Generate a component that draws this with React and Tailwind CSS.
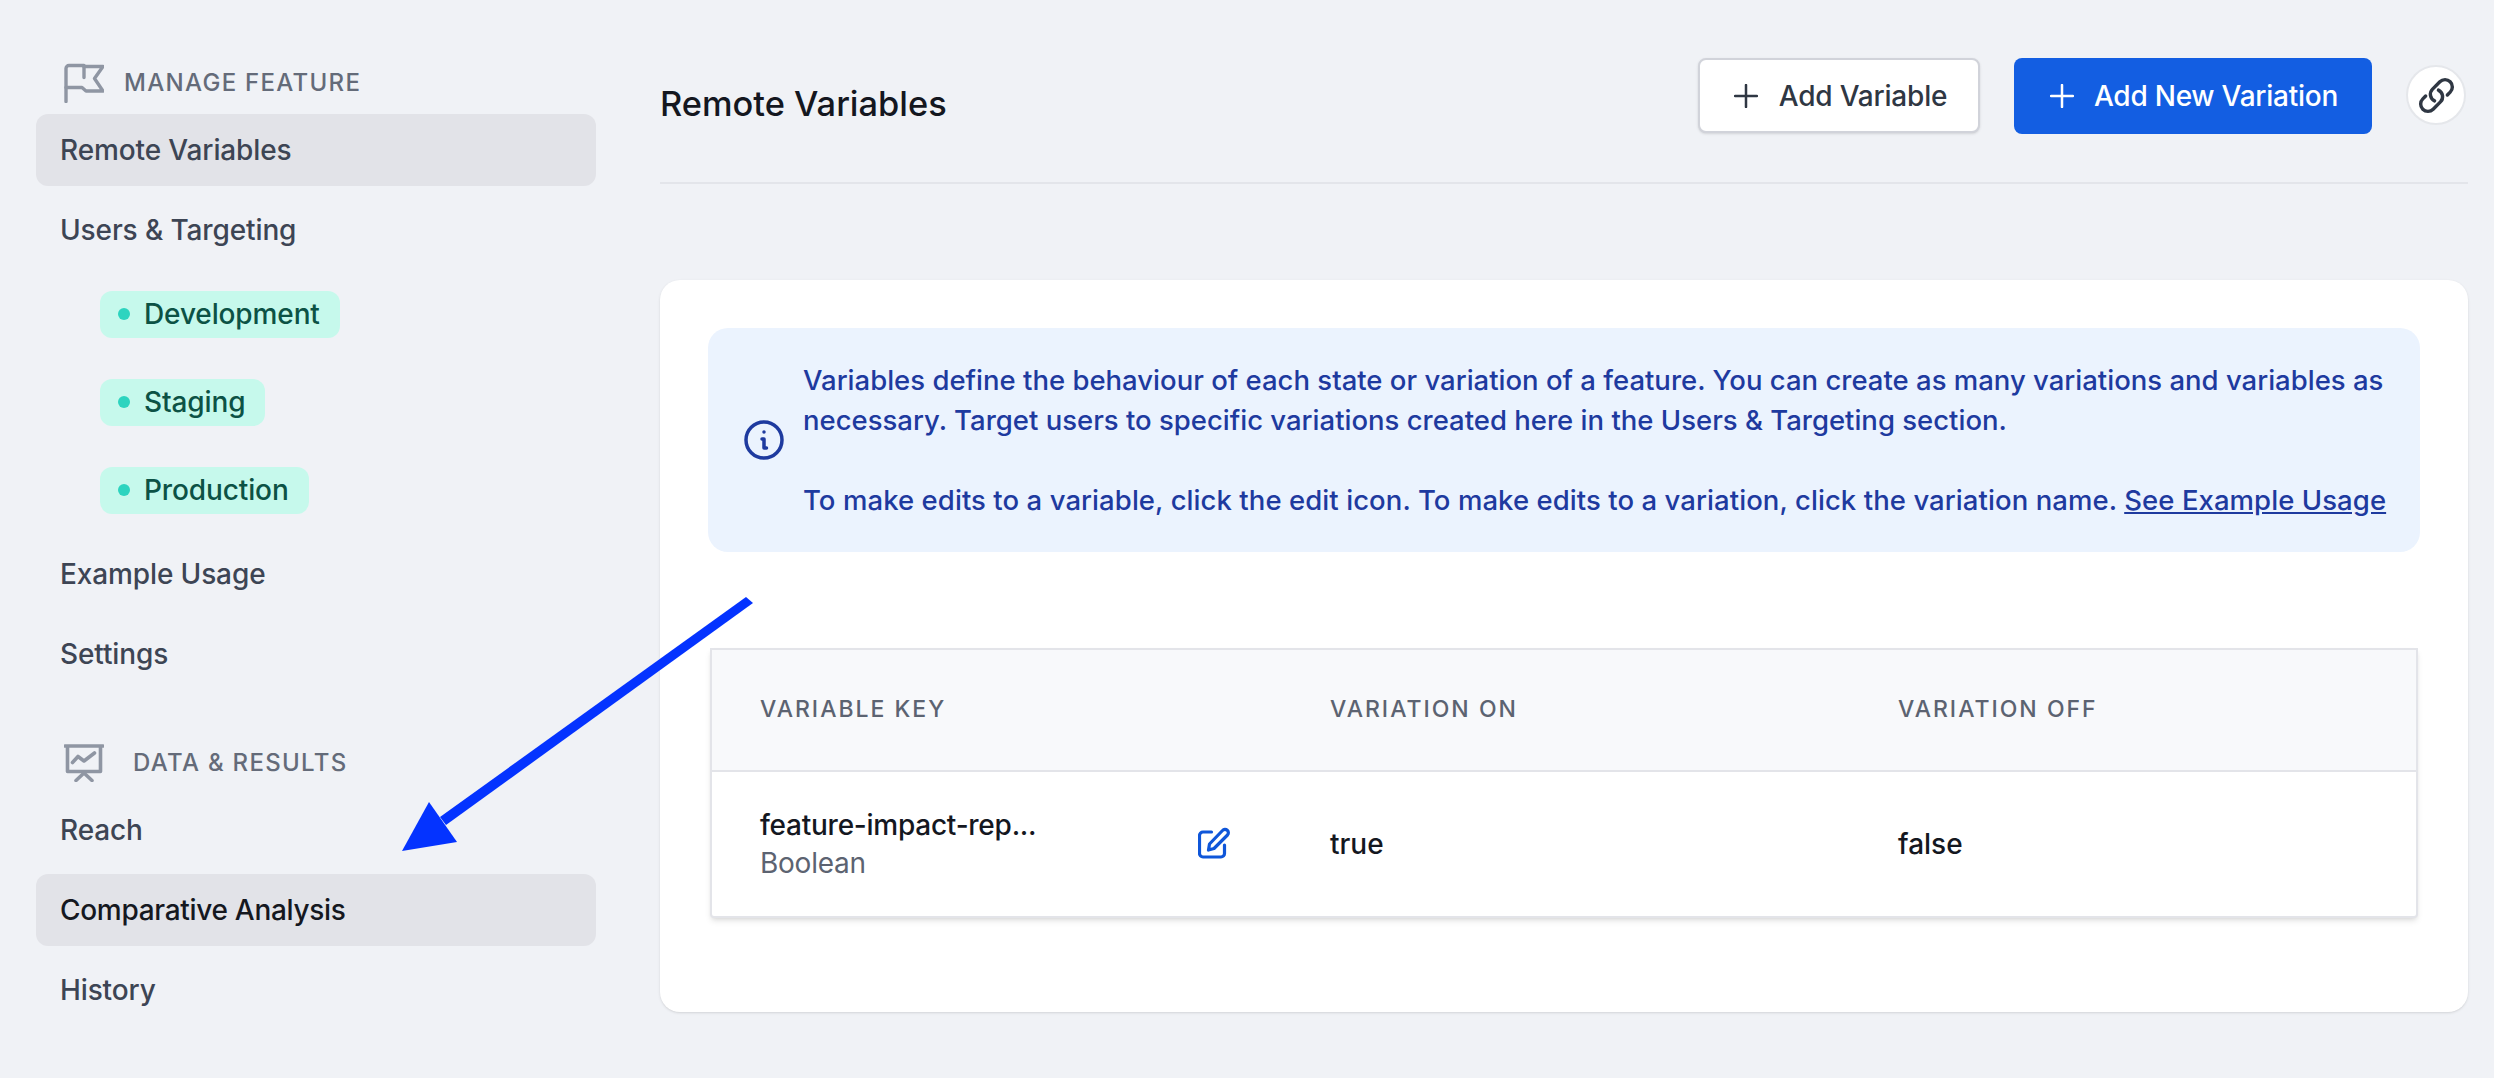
import React from 'react';

function FlagIcon() {
  return (
    <svg width="40" height="40" viewBox="0 0 40 40" fill="none" stroke="#8f96a3" strokeWidth="3.4" strokeLinecap="round" strokeLinejoin="round">
      <path d="M2 38.500V5.500a3 3 0 0 1 3-3h15v12" />
      <path d="M20 3.500h19l-8.500 12L39 28H22l-4-3.500H2" />
    </svg>
  );
}

function ChartIcon() {
  return (
    <svg width="40" height="38" viewBox="0 0 40 38" fill="none" stroke="#8f96a3" strokeWidth="3.6" strokeLinecap="round" strokeLinejoin="round">
      <path d="M1 2h38M3.500 2v25.500h33V2" />
      <path d="M8.500 18.500l5.500-6 6 4.500 10.500-8" />
      <path d="M12 36.500l8-7.500 8 7.500" />
    </svg>
  );
}

function Plus({ color }) {
  return (
    <svg width="24" height="24" viewBox="0 0 24 24" fill="none" stroke={color} strokeWidth="2.5" strokeLinecap="round">
      <path d="M12 1v22M1 12h22" />
    </svg>
  );
}

function LinkIcon() {
  return (
    <svg width="39" height="39" viewBox="0 0 24 24" fill="none" stroke="#2f3743" strokeWidth="2.100" strokeLinecap="round" strokeLinejoin="round">
      <path d="M13.190 8.688a4.500 4.500 0 0 1 1.242 7.244l-4.500 4.500a4.500 4.500 0 0 1-6.364-6.364l1.757-1.757m13.350-.622l1.757-1.757a4.500 4.500 0 0 0-6.364-6.364l-4.500 4.500a4.500 4.500 0 0 0 1.242 7.244" />
    </svg>
  );
}

function EditIcon() {
  return (
    <svg width="32" height="32" viewBox="0 0 32 32" fill="none" stroke="#0f56d9" strokeWidth="3.200" strokeLinecap="round" strokeLinejoin="round">
      <path d="M13.500 5H5a3.500 3.500 0 0 0-3.500 3.500v18A3.500 3.500 0 0 0 5 30h18a3.500 3.500 0 0 0 3.500-3.500V18" />
      <path d="M24.500 3.500a3.300 3.300 0 0 1 5 4.500L16 21.500l-5.500 1.500 1-6z" />
    </svg>
  );
}

function InfoIcon() {
  return (
    <svg className="shrink-0" width="40" height="40" viewBox="0 0 40 40" fill="none" stroke="#1e3a9f" strokeWidth="3.500" strokeLinecap="round" strokeLinejoin="round">
      <circle cx="20" cy="20" r="18" />
      <path d="M18 19h2v9h2.500" />
      <circle cx="20" cy="12" r="1" fill="#1e3a9f" strokeWidth="1.500" />
    </svg>
  );
}

function NavItem({ label, active, strong }) {
  return (
    <div className={`flex h-[72px] items-center rounded-[12px] px-6 text-[28px] font-medium ${active ? 'bg-[#e2e3e8]' : ''} ${strong ? 'tracking-[-0.3px] text-[#15181f]' : 'tracking-[-0.12px] text-[#3d4554]'}`}>
      {label}
    </div>
  );
}

function EnvPill({ label }) {
  return (
    <div className="flex h-[88px] items-center pl-16">
      <div className="flex h-[47px] items-center gap-[14px] rounded-[12px] bg-[#c6f9ec] pl-[18px] pr-5 text-[28px] font-medium tracking-[-0.12px] text-[#0c5245]">
        <span className="h-3 w-3 rounded-full bg-[#2dd4bf]" />
        {label}
      </div>
    </div>
  );
}

function SectionHead({ icon, label, gap }) {
  return (
    <div className={`flex items-center pl-7 text-[24px] font-medium uppercase tracking-[1.3px] text-[#646b79] ${gap}`}>
      {icon}
      <span>{label}</span>
    </div>
  );
}

function Arrow() {
  return (
    <svg className="absolute left-[395px] top-[590px]" width="365" height="270" viewBox="395 590 365 270" fill="#0433ff">
      <path d="M746 597l7 6-307 222-6-8z" />
      <path d="M402 851l27-49 28 40z" />
    </svg>
  );
}

export default function App() {
  return (
    <div className="relative flex h-[1078px] w-[2494px] overflow-hidden bg-[#f0f2f6] font-['Inter',sans-serif]">
      <aside className="w-[660px] shrink-0 pl-9 pr-16 pt-[60px]">
        <SectionHead icon={<FlagIcon />} label="Manage Feature" gap="h-[46px] gap-[20px]" />
        <div className="mt-2 flex flex-col gap-2">
          <NavItem label="Remote Variables" active />
          <NavItem label="Users & Targeting" />
        </div>
        <div className="mt-[4px] flex flex-col">
          <EnvPill label="Development" />
          <EnvPill label="Staging" />
          <EnvPill label="Production" />
        </div>
        <div className="mt-[4px] flex flex-col gap-2">
          <NavItem label="Example Usage" />
          <NavItem label="Settings" />
        </div>
        <div className="mt-[51px]">
          <SectionHead icon={<ChartIcon />} label="Data & Results" gap="h-[44px] gap-[29px]" />
        </div>
        <div className="mt-[9px] flex flex-col gap-2">
          <NavItem label="Reach" />
          <NavItem label="Comparative Analysis" active strong />
          <NavItem label="History" />
        </div>
      </aside>

      <main className="w-[1808px] shrink-0">
        <header className="flex h-[184px] items-start justify-between border-b-2 border-[#e3e5ea] pr-[2px]">
          <h1 className="mt-[80px] text-[34.4px] leading-[48px] font-medium text-[#14171f]">Remote Variables</h1>
          <div className="mt-[58px] flex items-start">
            <button className="flex h-[75px] w-[282px] items-center justify-center gap-[21px] rounded-[8px] border-2 border-[#d1d3da] bg-white pl-[3px] text-[28px] font-medium tracking-[-0.2px] text-[#2f3743] shadow-sm">
              <Plus color="#2f3743" />
              Add Variable
            </button>
            <button className="ml-[34px] flex h-[76px] w-[358px] items-center justify-center gap-[20px] rounded-[8px] bg-[#135ee2] pl-[2px] text-[28px] font-medium tracking-[-0.25px] text-white">
              <Plus color="#ffffff" />
              Add New Variation
            </button>
            <div className="ml-[34px] mt-[7px] flex h-[60px] w-[60px] items-center justify-center rounded-full border-2 border-[#e5e7eb] bg-white">
              <LinkIcon />
            </div>
          </div>
        </header>

        <section className="mt-[96px] h-[732px] rounded-[20px] bg-white px-[48px] pt-[48px] shadow-sm">
          <div className="flex h-[224px] items-center rounded-[20px] bg-[#ebf3fe] pl-[36px] pr-6 text-[27.5px] leading-[40px] font-medium text-[#1e3a9f]">
            <InfoIcon />
            <div className="ml-[19px]">
              <p>Variables define the behaviour of each state or variation of a feature. You can create as many variations and variables as necessary. Target users to specific variations created here in the Users &amp; Targeting section.</p>
              <p className="mt-10 tracking-[0.07px]">To make edits to a variable, click the edit icon. To make edits to a variation, click the variation name. <span className="underline">See Example Usage</span></p>
            </div>
          </div>

          <div className="ml-[2px] mt-[96px] w-[1708px] rounded-b-[4px] border-2 border-[#e3e4e9] bg-white shadow-md">
            <div className="flex h-[122px] items-center border-b-2 border-[#e3e4e9] bg-[#f8f9fb] pl-12 text-[23px] font-medium uppercase tracking-[2px] text-[#5c6371]">
              <div className="mb-[2px] w-[570px]">Variable Key</div>
              <div className="mb-[2px] w-[568px]">Variation On</div>
              <div className="mb-[2px]">Variation Off</div>
            </div>
            <div className="flex h-[144px] items-center pl-12 text-[28px] font-medium text-[#14171f]">
              <div className="flex w-[570px] items-center">
                <div className="w-[438px]">
                  <div className="leading-[38px] tracking-[-0.25px]">feature-impact-rep...</div>
                  <div className="leading-[38px] font-normal tracking-[-0.25px] text-[#5c6371]">Boolean</div>
                </div>
                <div className="mb-[2px]"><EditIcon /></div>
              </div>
              <div className="w-[568px]">true</div>
              <div>false</div>
            </div>
          </div>
        </section>
      </main>
      <Arrow />
    </div>
  );
}
